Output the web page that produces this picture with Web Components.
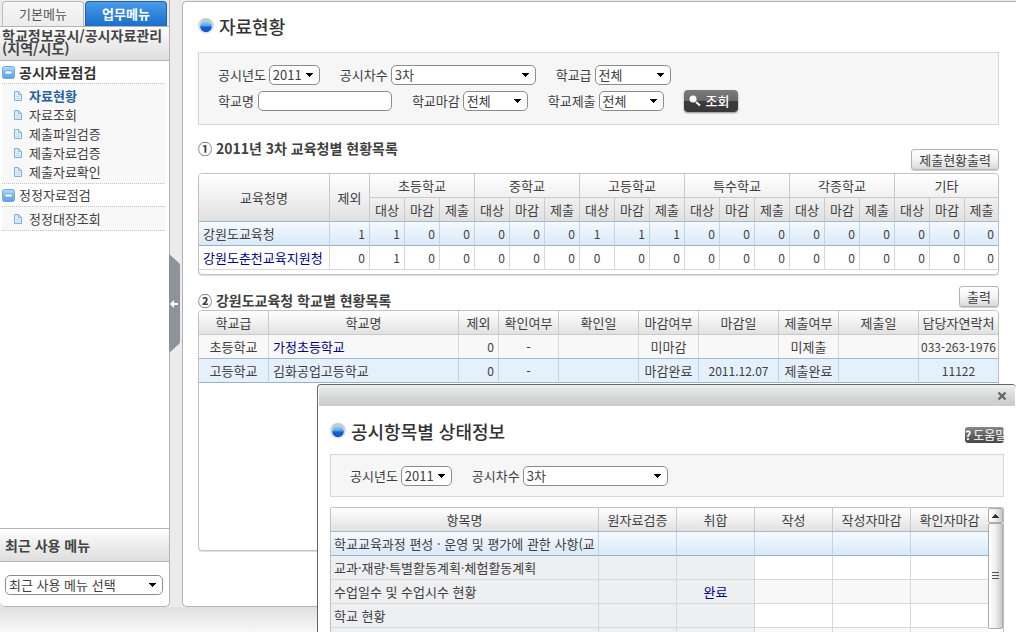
<!DOCTYPE html>
<html lang="ko">
<head>
<meta charset="utf-8">
<title>자료현황</title>
<style>
html,body{margin:0;height:100%}
body{font:13px/18px "Noto Sans CJK KR",sans-serif;color:#404040;background:#ebebeb;overflow:hidden}
</style>
</head>
<body>
<app-shell>
  <side-nav slot="nav">
    <nav-group label="공시자료점검" strong>
      <nav-item current>자료현황</nav-item>
      <nav-item>자료조회</nav-item>
      <nav-item>제출파일검증</nav-item>
      <nav-item>제출자료검증</nav-item>
      <nav-item>제출자료확인</nav-item>
    </nav-group>
    <nav-group label="정정자료점검">
      <nav-item>정정대장조회</nav-item>
    </nav-group>
  </side-nav>
  <main-panel></main-panel>
  <status-window slot="window"></status-window>
</app-shell>
<script>
const define = (name, html, setup) => {
  const t = document.createElement('template');
  t.innerHTML = html;
  customElements.define(name, class extends HTMLElement {
    constructor() {
      super();
      this.attachShadow({mode: 'open'}).append(t.content.cloneNode(true));
    }
    connectedCallback() { if (setup) setup(this, this.shadowRoot); }
  });
};

define('pick-box', `<style>
:host{display:inline-flex;align-items:center;gap:3px;white-space:nowrap}
:host([wide]),:host([wide]) .box{flex:1}
.box{position:relative;width:var(--w,auto);height:20px}
label:empty{display:none}
select{appearance:none;box-sizing:border-box;display:block;width:100%;height:20px;margin:0;padding:0 14px 0 3px;border:1px solid #8c8c8c;border-radius:5px;background:#fff;color:#404040;font:inherit;line-height:18px}
svg{position:absolute;right:6px;top:8px;width:9px;height:5px;pointer-events:none}
</style><label for="s"></label><div class="box"><select id="s"></select><svg viewBox="0 0 9 5"><path d="M1 0h7v1H7v1H6v1H5v1H4V3H3V2H2V1H1z" fill="#000"/></svg></div>`,
(el, r) => {
  r.querySelector('label').textContent = el.getAttribute('label') || '';
  const s = r.querySelector('select');
  s.replaceChildren(new Option(el.getAttribute('value')));
  if (!el.hasAttribute('label')) s.setAttribute('aria-label', el.getAttribute('value'));
});

define('page-title', `<style>
:host{display:block}
h1{display:flex;align-items:center;gap:5px;margin:0;font-size:18px;line-height:24px;font-weight:500;color:#333;white-space:nowrap}
svg{width:16px;height:16px;flex:none}
</style><h1><svg viewBox="0 0 16 16"><defs><linearGradient id="g" x2="0" y2="1"><stop offset="0" stop-color="#9fd8fb"/><stop offset=".4" stop-color="#5aaaf0"/><stop offset=".55" stop-color="#0f5fd6"/><stop offset="1" stop-color="#1a55b8"/></linearGradient><linearGradient id="h" x2="0" y2="1"><stop offset="0" stop-color="#c9c4c4"/><stop offset="1" stop-color="#e6f0fa"/></linearGradient></defs><circle cx="8" cy="8" r="8" fill="url(#h)"/><circle cx="8" cy="8.500" r="5.800" fill="url(#g)"/></svg><slot></slot></h1>`);

define('push-button', `<style>
:host{display:inline-block}
button{box-sizing:border-box;display:block;height:21px;padding:0 7px;border:1px solid #b4b4b4;border-radius:3px;background:linear-gradient(#fff,#f4f4f4 50%,#d9d9d9);box-shadow:0 1px 1px #ccc;color:#404040;font:inherit;line-height:18px;white-space:nowrap}
</style><button type="button"><slot></slot></button>`);

define('search-button', `<style>
:host{display:inline-block}
button{display:flex;align-items:center;gap:5px;height:22px;padding:0 8px 0 5px;border:0;border-radius:4px;background:linear-gradient(#7c7c7c,#686868 50%,#3c3c3c 50%,#383838);box-shadow:0 1px 2px #888;color:#fff;font:inherit;font-weight:500;white-space:nowrap}
svg{width:12px;height:12px}
</style><button type="button"><svg viewBox="0 0 12 12"><circle cx="4" cy="4" r="3.500" fill="#fff"/><path d="M7 7 11 10.500" stroke="#fff" stroke-width="2"/></svg><slot></slot></button>`);

define('help-button', `<style>
:host{display:block}
button{display:flex;gap:2px;width:39px;height:16px;padding:0;border:0;border-radius:3px;background:linear-gradient(#888,#666 45%,#484848);color:#fff;font:12px/16px "Noto Sans CJK KR",sans-serif;white-space:nowrap;overflow:hidden}
b{font-weight:700}
</style><button type="button"><b>?</b><span>도움말</span></button>`);

define('nav-group', `<style>
:host{display:block}
h3{display:flex;align-items:center;gap:4px;margin:0;height:22px;font:inherit;color:#404040}
:host([strong]) h3{font-size:14px;font-weight:700;color:#333}
svg{width:13px;height:13px}
ul{margin:0;padding:2px 0;list-style:none;background:#f8f8f8;border:dotted #c4c4c4;border-width:1px 0}
</style><h3><svg viewBox="0 0 13 13"><defs><linearGradient id="g" x2="0" y2="1"><stop offset="0" stop-color="#b3dcf8"/><stop offset="1" stop-color="#5b9fdf"/></linearGradient></defs><rect x=".5" y=".5" width="12" height="12" rx="2" fill="url(#g)" stroke="#6aa9dd"/><rect x="3" y="5" width="7" height="3" fill="#fff" stroke="#4b8fd0" stroke-width=".6"/></svg><span></span></h3><ul><slot></slot></ul>`,
(el, r) => { r.querySelector('span').textContent = el.getAttribute('label'); });

define('nav-item', `<style>
:host{display:list-item;list-style:none}
a{display:flex;align-items:center;gap:7px;height:19px;padding-left:12px;color:#404040;text-decoration:none;white-space:nowrap}
:host([current]) a{color:#23639b;font-weight:700}
svg{width:8px;height:10px}
</style><a href="#"><svg viewBox="0 0 8 10"><path d="M.5.5h4l3 3v6h-7z" fill="#dceefb" stroke="#7fb0da"/><path d="M4.500.5v3h3" fill="none" stroke="#8fbde2"/><path d="M2.500 5.500h3M2.500 7.500h3" stroke="#b9d8f0"/></svg><span><slot></slot></span></a>`);

define('side-nav', `<style>
:host{display:flex;flex-direction:column;box-sizing:border-box;background:#fff;border:solid #b4b4b4;border-width:0 1px 1px 0;border-radius:0 0 5px 5px;overflow:hidden}
.tabs{box-sizing:border-box;display:flex;gap:1px;height:26px;padding:1px 2px 0;background:#ebebeb}
.tabs button{flex:1;height:25px;padding:0;border:1px solid #bcbcbc;border-bottom:0;border-radius:4px 4px 0 0;background:linear-gradient(#f7f7f7,#ececec);color:#555;font:inherit;white-space:nowrap}
.tabs button.on{border-color:#1c62ae;background:linear-gradient(#4a9bea,#1a6fcb);color:#fff;font-weight:700}
h2{margin:0;font-size:14px;font-weight:700;color:#444;background:linear-gradient(#fff,#f0f0f0 40%,#dedede);border:solid #b4b4b4;border-width:1px 0}
.path{padding:2px 2px 5px;line-height:13px;white-space:nowrap}
nav{flex:1;padding:0 4px 0 2px}
.recent{height:32px;padding-left:5px;line-height:32px}
.pick{display:flex;padding:13px 6px 11px 5px}
</style>
<div class="tabs"><button type="button">기본메뉴</button><button type="button" class="on">업무메뉴</button></div>
<h2 class="path">학교정보공시/공시자료관리<br>(지역/시도)</h2>
<nav><slot></slot></nav>
<h2 class="recent">최근 사용 메뉴</h2>
<div class="pick"><pick-box wide value="최근 사용 메뉴 선택"></pick-box></div>`);

define('search-bar', `<style>
:host{display:block;padding:12px 19px;background:#f6f6f6;border:1px solid #d6d6d6}
.row{display:flex;align-items:center;gap:20px;min-height:20px;white-space:nowrap}
.row+.row{height:22px;margin-top:5px}
.field{display:flex;align-items:center;gap:4px}
input{box-sizing:border-box;width:134px;height:20px;padding:0 4px;border:1px solid #8c8c8c;border-radius:5px;background:#fff;font:inherit}
</style>
<div class="row"><pick-box label="공시년도" value="2011" style="--w:51px"></pick-box><pick-box label="공시차수" value="3차" style="--w:145px"></pick-box><pick-box label="학교급" value="전체" style="--w:76px"></pick-box></div>
<div class="row"><div class="field"><label for="n">학교명</label><input id="n" type="text"></div><pick-box label="학교마감" value="전체" style="--w:65px"></pick-box><pick-box label="학교제출" value="전체" style="--w:65px"></pick-box><search-button>조회</search-button></div>`);

const gridCss = `
:host{display:block;box-sizing:border-box;background:#fff;border:1px solid #c2c2c2;border-radius:4px;box-shadow:0 1px 1px #ddd;overflow:hidden}
table{width:100%;table-layout:fixed;border-collapse:separate;border-spacing:0}
thead{background:linear-gradient(#fff,#f0f0f0 50%,#dfdfdf)}
th,td{box-sizing:border-box;height:24px;padding:0 4px;border:solid #d8d8d8;border-width:0 1px 1px 0;font-weight:400;line-height:18px;white-space:nowrap;overflow:hidden;text-align:center}
th{padding:0;border-color:#cacaca}
th:last-child,td:last-child{border-right:0}
.l{text-align:left}.r{text-align:right;font-size:12px}.n{font-size:12px;padding:0}
.sel td{background:linear-gradient(#f5fafe,#d9e9f8);border-bottom-color:#98b2c6;border-right-color:#c3d3e0;box-shadow:0 -1px 0 #a3b9c9}
a{color:#000080;text-decoration:none}`;

const cols = w => '<colgroup>' + w.map(x => `<col${x ? ` style="width:${x}px"` : ''}>`).join('') + '</colgroup>';
const levels = ['초등학교', '중학교', '고등학교', '특수학교', '각종학교', '기타'];
const nums = (v, mid) => v.map((n, i) => `<td class="${i === mid ? 'n' : 'r'}">${n}</td>`).join('');
const zeros = n => Array(n).fill(0);

define('office-grid', `<style>${gridCss}:host{padding-bottom:4px}</style>
<table>${cols([131, 40, ...Array(17).fill(35), 0])}
<thead><tr><th rowspan="2">교육청명</th><th rowspan="2">제외</th>${levels.map(n => `<th colspan="3">${n}</th>`).join('')}</tr>
<tr>${levels.map(() => '<th>대상</th><th>마감</th><th>제출</th>').join('')}</tr></thead>
<tbody><tr class="sel"><td class="l">강원도교육청</td>${nums([1, 1, 0, 0, 0, 0, 0, 1, 1, 1, ...zeros(9)], 7)}</tr>
<tr><td class="l"><a href="#">강원도춘천교육지원청</a></td>${nums([0, 1, ...zeros(17)], 7)}</tr></tbody></table>`);

define('school-grid', `<style>${gridCss}.sel td{background:#e4f1fc}.odd td{background:#f8f8f8}</style>
<table>${cols([70, 190, 40, 60, 80, 60, 80, 60, 80, 0])}
<thead><tr>${['학교급', '학교명', '제외', '확인여부', '확인일', '마감여부', '마감일', '제출여부', '제출일', '담당자연락처'].map(t => `<th>${t}</th>`).join('')}</tr></thead>
<tbody><tr class="odd"><td>초등학교</td><td class="l"><a href="#">가정초등학교</a></td><td class="r">0</td><td>-</td><td></td><td>미마감</td><td></td><td>미제출</td><td></td><td class="n">033-263-1976</td></tr>
<tr class="sel"><td>고등학교</td><td class="l">김화공업고등학교</td><td class="r">0</td><td>-</td><td></td><td>마감완료</td><td class="n">2011.12.07</td><td>제출완료</td><td></td><td class="n">11122</td></tr></tbody></table>`);

define('item-grid', `<style>${gridCss}
:host{display:flex;border-radius:2px;align-items:flex-start}
.g td{background:#f8f8f8}td:nth-child(-n+3),.g td:nth-child(-n+3){background:#eeeff1}
.sel td:nth-child(n){background:linear-gradient(#f5fafe,#d9e9f8)}
table{flex:1;width:0}
td.l{padding:0 0 0 3px}
.bar{flex:none;display:flex;flex-direction:column;width:15px;height:121px;background:#eee}
.up,.thumb{box-sizing:border-box;display:flex;align-items:center;justify-content:center;border:1px solid #aaa;background:linear-gradient(90deg,#fff,#eee 50%,#c9c9cf);border-radius:2px}
.up{height:15px}.thumb{flex:1}
</style>
<table>${cols([268, 78, 78, 78, 78, 0])}
<thead><tr>${['항목명', '원자료검증', '취합', '작성', '작성자마감', '확인자마감'].map(t => `<th>${t}</th>`).join('')}</tr></thead>
<tbody>${[['sel', '학교교육과정 편성 · 운영 및 평가에 관한 사항(교', ''], ['', '교과·재량·특별활동계획·체험활동계획', ''], ['g', '수업일수 및 수업시수 현황', '<a href="#">완료</a>'], ['', '학교 현황', ''], ['g', '', '']].map(([c, t, s]) => `<tr class="${c}"><td class="l">${t}</td><td></td><td>${s}</td><td></td><td></td><td></td></tr>`).join('')}</tbody></table>
<div class="bar"><div class="up"><svg width="7" height="4" viewBox="0 0 7 4"><path d="M3 0h1v1h1v1h1v1h1v1H0V3h1V2h1V1h1z" fill="#333"/></svg></div><div class="thumb"><svg width="7" height="8" viewBox="0 0 7 8"><path d="M0 .5h7M0 3.500h7M0 6.500h7" stroke="#555"/></svg></div></div>`);

define('main-panel', `<style>
:host{display:flex;flex-direction:column;flex:1;box-sizing:border-box;min-width:0;margin-top:1px;padding:12px 17px 55px 15px;background:#fff;border:solid #b4b4b4;border-width:1px 0 1px 1px;border-radius:5px 0 0 5px}
search-bar{margin-top:14px}
.head{display:flex;justify-content:space-between;white-space:nowrap}
.first{height:48px}.second{height:35px}
h2{margin:0;font-size:14px;line-height:18px;font-weight:700;color:#404040}
.first h2{margin-top:14px}.second h2{margin-top:16px}
.first push-button{margin-top:24px}.second push-button{margin-top:11px}
school-grid{flex:1}
</style>
<page-title>자료현황</page-title>
<search-bar></search-bar>
<div class="head first"><h2>① 2011년 3차 교육청별 현황목록</h2><push-button>제출현황출력</push-button></div>
<office-grid></office-grid>
<div class="head second"><h2>② 강원도교육청 학교별 현황목록</h2><push-button>출력</push-button></div>
<school-grid></school-grid>`);

define('status-window', `<style>
:host{display:block;box-sizing:border-box;background:#fff;border:solid #666;border-width:1px 0 0 1px;border-radius:4px 4px 0 0;overflow:hidden}
.bar{display:flex;align-items:center;justify-content:flex-end;height:21px;padding:0 8px 0 0;margin:0 1px;background:linear-gradient(#f0f0f0,#d3d5d7 60%,#c9cbce)}
.bar button{display:flex;padding:0;border:0;background:none}
.body{padding:13px 12px 0}
.head{display:flex;justify-content:space-between;align-items:center;height:24px}
help-button{margin-top:8px}
.filter{display:flex;align-items:center;gap:20px;box-sizing:border-box;height:43px;margin-top:11px;padding:0 19px;background:#f6f6f6;border:1px solid #d6d6d6}
item-grid{margin-top:10px}
</style>
<div class="bar"><button type="button" aria-label="닫기"><svg width="10" height="10" viewBox="0 0 10 10"><path d="M1.500 1.500l7 7M8.500 1.500l-7 7" stroke="#666" stroke-width="2.400"/></svg></button></div>
<div class="body"><div class="head"><page-title>공시항목별 상태정보</page-title><help-button></help-button></div>
<div class="filter"><pick-box label="공시년도" value="2011" style="--w:51px"></pick-box><pick-box label="공시차수" value="3차" style="--w:145px"></pick-box></div>
<item-grid></item-grid></div>`);

define('app-shell', `<style>
:host{display:flex;flex-direction:column;position:relative;height:100vh;min-height:560px;overflow:hidden}
.work{flex:1;display:flex;min-height:0}
::slotted(side-nav){flex:none;width:170px}
.gutter{flex:none;display:flex;align-items:center;width:12px}
.gutter button{display:flex;padding:0;border:0;background:none;margin-left:-1px}
footer{flex:none;height:25px;background:linear-gradient(#e0e0e0,#f8f8f8)}
.window{position:absolute;left:317px;right:0;top:384px;bottom:0;display:grid}
</style>
<div class="work"><slot name="nav"></slot>
<div class="gutter"><button type="button" aria-label="메뉴 접기"><svg width="12" height="100" viewBox="0 0 12 100"><path d="M0 0 10 9Q11 10 11 12V87Q11 89 10 90L0 99z" fill="#8d929b"/><path d="M1 50 5 46V49H9V51H5V54z" fill="#fff"/></svg></button></div>
<slot></slot></div><footer></footer>
<div class="window"><slot name="window"></slot></div>`);
</script>
</body>
</html>
